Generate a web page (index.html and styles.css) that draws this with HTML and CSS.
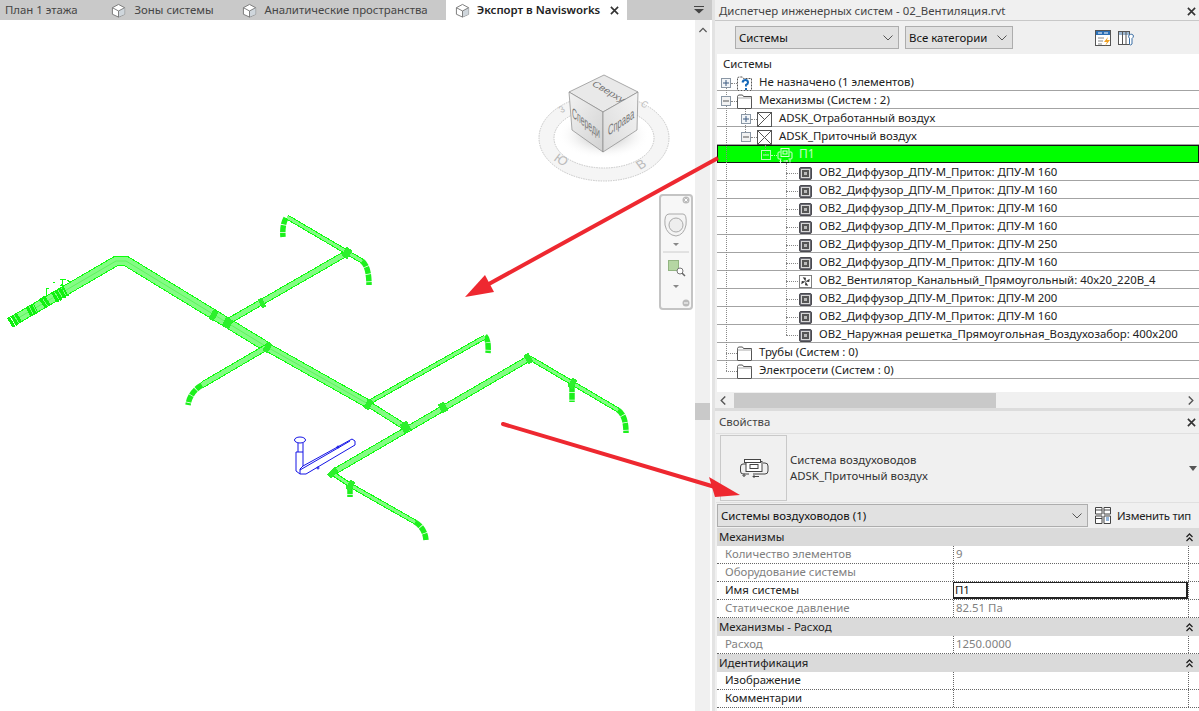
FILE: index.html
```html
<!DOCTYPE html>
<html lang="ru">
<head>
<meta charset="utf-8">
<title>Диспетчер инженерных систем</title>
<link rel="stylesheet" href="styles.css">
</head>
<body>
<svg class="defs" width="0" height="0" aria-hidden="true">
  <symbol id="i-house" viewBox="0 0 16 16"><path d="M8 1.500 14.500 5v7L8 15 1.500 12V5Z" fill="#fff" stroke="#777"/><path d="M8 8.500 14.500 5v7L8 15Z" fill="#cfd6dc"/><path d="M1.500 5 8 8.500 14.500 5M8 8.500V15" fill="none" stroke="#777"/></symbol>
  <symbol id="i-folder" viewBox="0 0 15 15"><path d="M.5 2.500V14.500H14.500V2.500H6.500L5.500 1H1.500Z" fill="#fff" stroke="#555"/><path d="M.5 4H14.500" stroke="#aaa"/></symbol>
  <symbol id="i-query" viewBox="0 0 15 15"><path d="M.5 2.500V14.500H14.500V2.500H6.500L5.500 1H1.500Z" fill="#fff" stroke="#555" stroke-dasharray="2 1"/><path d="M5.500 6.500Q6 4 8.500 4T11 6.500Q11 8 9 9V10.500" fill="none" stroke="#1668b8" stroke-width="2"/><path d="M8 12h2v2H8Z" fill="#1668b8"/></symbol>
  <symbol id="i-exhaust" viewBox="0 0 15 15"><rect x=".5" y=".5" width="14" height="14" fill="#fff" stroke="#555"/><path d="M.5.500 7.500 7.500M.5 14.500 14.500.500" stroke="#555"/></symbol>
  <symbol id="i-supply" viewBox="0 0 15 15"><rect x=".5" y=".5" width="14" height="14" fill="#fff" stroke="#555"/><path d="M.5.500 14.500 14.500M14.500.500.500 14.500" stroke="#555"/></symbol>
  <symbol id="i-diff" viewBox="0 0 13 13"><rect x=".5" y=".5" width="12" height="12" rx="1.500" fill="#6a6a72" stroke="#4a4a50"/><rect x="2.500" y="2.500" width="8" height="8" fill="#555" stroke="#d8d8d8"/><rect x="5" y="5" width="3" height="3" fill="#bbb"/></symbol>
  <symbol id="i-fan" viewBox="0 0 14 14"><rect x=".5" y=".5" width="13" height="13" fill="#fff" stroke="#777"/><path d="M7 7 4 2.500 7.500 3ZM7 7l4.500-3-.5 3.500ZM7 7l3 4.500-3.500-.5ZM7 7l-4.500 3 .5-3.500Z" fill="#333"/></symbol>
  <symbol id="i-sys" viewBox="0 0 15 15"><path d="M3 4H1.500Q.5 4 .5 5V10Q.5 11 1.500 11H4M12 4h1.500Q14.500 4 14.500 5V10Q14.500 11 13.500 11H11" fill="none" stroke="currentColor"/><rect x="3.500" y=".5" width="8" height="8" fill="none" stroke="currentColor"/><rect x="5.500" y="3" width="4" height="3" fill="none" stroke="currentColor"/><path d="M6 13H10M9 12l1 1-1 1M3 11.500v3M2 13.500l1 1 1-1M12.500 11.500v3" fill="none" stroke="currentColor"/></symbol>
  <symbol id="i-chev" viewBox="0 0 10 6"><path d="M.5.500 5 5 9.500.500" fill="none" stroke="#555"/></symbol>
  <symbol id="i-dchev" viewBox="0 0 7 9"><path d="M.5 4 3.500 1 6.500 4M.5 8 3.500 5 6.500 8" fill="none" stroke="#222" stroke-width="1.300"/></symbol>
  <symbol id="i-x" viewBox="0 0 10 10"><path d="M1 1 9 9M9 1 1 9" stroke="#333" stroke-width="1.800"/></symbol>
  <symbol id="i-plus" viewBox="0 0 10 10"><rect x=".5" y=".5" width="9" height="9" fill="#f2f5f8" stroke="#8a97a5"/><path d="M2 5H8M5 2V8" stroke="#3c5a80"/></symbol>
  <symbol id="i-minus" viewBox="0 0 10 10"><rect x=".5" y=".5" width="9" height="9" fill="#f2f2f2" stroke="#8a97a5"/><path d="M2 5H8" stroke="#555"/></symbol>
</svg>

<div class="app">
  <main class="left">
    <nav class="tabs">
      <div class="tab tab-first"><span class="tab-label">План 1 этажа</span></div>
      <div class="tab tab-second"><svg class="tab-icon"><use href="#i-house"/></svg><span class="tab-label">Зоны системы</span></div>
      <div class="tab tab-last"><svg class="tab-icon"><use href="#i-house"/></svg><span class="tab-label">Аналитические пространства</span></div>
      <div class="tab tab-active"><svg class="tab-icon"><use href="#i-house"/></svg><span class="tab-label">Экспорт в Navisworks</span><svg class="tab-close"><use href="#i-x"/></svg></div>
      <div class="tab-menu"><svg width="10" height="8" viewBox="0 0 10 8"><path d="M0 .5H10" stroke="#444"/><path d="M0 3H10L5 7.500Z" fill="#444"/></svg></div>
    </nav>
    <div class="view-row">
      <div class="canvas">
        <svg class="model" viewBox="0 20 695 691" width="695" height="691">
          <defs>
            <g id="d-wide"><path d="M13 321 116 261H126L267 347"/></g>
            <g id="d-wide2"><path d="M267 347 370 405"/></g>
            <g id="d-mid"><path d="M370 405 405 427M227 322 347 253M267 347 202 385M332 473 528 359"/></g>
            <g id="d-thin"><path d="M287 217 362 261M350 485 415 522M368 403 485 337M530 358 618 410M332 473 350 485"/></g>
            <g id="d-drop"><path d="M286 218Q282 225 283 237M362 261Q369 266 369 285M485 336Q489 340 488 353M572 385V402M618 410Q626 415 626 433M350 487V497M415 522Q425 528 426 540M202 385Q190 392 188 405"/></g>
            <radialGradient id="cube-shadow"><stop offset="0" stop-color="#a0a0a0"/><stop offset="1" stop-color="#fff" stop-opacity="0"/></radialGradient>
            <linearGradient id="cube-left" x1="0" y1="0" x2="1" y2="1"><stop offset="0" stop-color="#f2f2f2"/><stop offset="1" stop-color="#d2d2d2"/></linearGradient>
            <linearGradient id="cube-right" x1="0" y1="1" x2="1" y2="0"><stop offset="0" stop-color="#dadada"/><stop offset="1" stop-color="#f4f4f4"/></linearGradient>
          </defs>

          <use href="#d-drop" class="drop"/>
          <use href="#d-wide" class="d-o w-wide"/><use href="#d-wide" class="d-i w-wide-i"/><use href="#d-wide" class="d-c"/>
          <use href="#d-wide2" class="d-o w-wide2"/><use href="#d-wide2" class="d-i w-wide2-i"/><use href="#d-wide2" class="d-c"/>
          <use href="#d-mid" class="d-o w-mid"/><use href="#d-mid" class="d-i w-mid-i"/>
          <use href="#d-thin" class="d-o w-thin"/><use href="#d-thin" class="d-i w-thin-i"/>

          <g class="joint">
            <path d="M211 314 216 317M224 321 231 325M265 346 270 349M366 403 371 406M344 251 350 255M260 304 264 302M402 429 409 425M440 409 446 406M570 382 575 385M348 484 353 487M526 360 531 357M331 471 335 475"/>
          </g>
          <g class="end-fit">
            <path d="M10 323 20 317M28 312 36 308M42 304 48 300M54 298 66 291"/>
          </g>
          <path class="annot" d="M46 297V289M46 288H49M60 286 63 284M62 279V291M60 279H66M67 280 70 282M53 283 55 282"/>

          <g class="blue">
            <ellipse cx="300" cy="440" rx="5.500" ry="3"/>
            <path d="M298 443V452M303 443V452M296 452H303M296 452V471L300 474H306L355 445V441L352 439 303 466M303 452V466M300 470 350 441M300 474V469L303 466"/>
            <circle cx="338" cy="447" r="1"/><circle cx="318" cy="468" r="1"/>
          </g>

          <ellipse class="cube-floor" cx="604" cy="138" rx="65" ry="43"/>
          <ellipse class="cube-ring" cx="604" cy="138" rx="50" ry="30"/>
          <ellipse cx="604" cy="135" rx="46" ry="24" fill="url(#cube-shadow)"/>
          <text class="compass" transform="matrix(.85 .5 -.6 .8 553 160)">Ю</text>
          <text class="compass" transform="matrix(.85 -.5 .6 .8 640 170)">В</text>
          <text class="compass compass-sm" transform="matrix(.8 -.3 .5 .8 561 113)">З</text>
          <text class="compass compass-sm" transform="matrix(.8 .3 -.5 .8 640 106)">С</text>
          <polygon points="604,75 638,92 603,112 569,92" fill="#e9e9e9" stroke="#888" stroke-width=".7"/>
          <polygon points="569,92 603,112 603,152 572,130" fill="url(#cube-left)" stroke="#888" stroke-width=".7"/>
          <polygon points="638,92 603,112 603,152 637,130" fill="url(#cube-right)" stroke="#888" stroke-width=".7"/>
          <text class="cube-text" transform="matrix(.8 .46 -.6 .55 591 85)">Сверху</text>
          <text class="cube-text" transform="matrix(.6 .46 0 1.250 572 117)">Спереди</text>
          <text class="cube-text" transform="matrix(.66 -.46 0 1.250 608 136)">Справа</text>
        </svg>
        <div class="navbar">
          <svg width="34" height="116" viewBox="0 0 34 116">
            <circle cx="27" cy="6" r="3.500" fill="#bbb"/><path d="M25.500 4.500 28.500 7.500M28.500 4.500 25.500 7.500" stroke="#fff"/>
            <path d="M6 31Q5 20 10 20L24 20Q28 20 27 31 25 41 17 42 8 41 6 31Z" fill="#f4f4f4" stroke="#aaa"/>
            <circle cx="17" cy="31" r="7" fill="#eee" stroke="#aaa"/>
            <path d="M14 49H20L17 52Z" fill="#888"/>
            <path d="M4 58H30" stroke="#ccc"/>
            <rect x="9.500" y="66.500" width="10" height="10" fill="#b5d6a3" stroke="#93b582"/>
            <circle cx="21" cy="77" r="3" fill="#fff" stroke="#777"/><path d="M23 79 26 82" stroke="#666" stroke-width="1.500"/>
            <path d="M14 91H20L17 94Z" fill="#888"/>
            <circle cx="27" cy="109" r="3.500" fill="#bbb"/><path d="M25 109H29" stroke="#fff"/>
          </svg>
        </div>
      </div>
      <div class="vscroll">
        <svg class="vscroll-up" width="8" height="6" viewBox="0 0 10 6"><path d="M.5 5.500 5 1 9.500 5.500" fill="none" stroke="#555" stroke-width="1.500"/></svg>
        <div class="vscroll-thumb"></div>
      </div>
    </div>
  </main>

  <aside class="right">
    <section class="panel-sys">
      <header class="panel-title panel-title-sys"><span>Диспетчер инженерных систем - 02_Вентиляция.rvt</span><svg class="panel-close"><use href="#i-x"/></svg></header>
      <div class="toolbar">
        <div class="select select-sys"><span>Системы</span><svg class="chev"><use href="#i-chev"/></svg></div>
        <div class="select select-cat"><span>Все категории</span><svg class="chev"><use href="#i-chev"/></svg></div>
        <svg class="tool-icon tool-first" viewBox="0 0 16 16"><rect x=".5" y=".5" width="15" height="15" fill="#fff" stroke="#555"/><rect x="1" y="1" width="14" height="4" fill="#2c6fb5"/><path d="M3 3H7M9 3h4" stroke="#fff"/><path d="M3 8H9M3 11H8M3 14H7" stroke="#888"/><path d="M13 7 9 12H12L10 16 15 10H12Z" fill="#f0a020"/></svg>
        <svg class="tool-icon" viewBox="0 0 16 16"><rect x=".5" y="1.500" width="11" height="13" fill="#fff" stroke="#555"/><rect x="1" y="2" width="10" height="3" fill="#9db8d2"/><path d="M4.500 2V14M8 2V14" stroke="#555"/><path d="M11 5Q14.500 3 15.500 6 15 8 14 8.500V14Q12.500 16 11.500 14V8.500Q10 7 11 5Z" fill="#fff" stroke="#3a6ea5"/></svg>
      </div>
      <div class="tree">
        <div class="tree-head">Системы</div>
        <i class="vline v0"></i><i class="vline v1"></i><i class="vline v2"></i><i class="vline v3"></i>
        <div class="row l0"><svg class="exp"><use href="#i-plus"/></svg><b class="dash"></b><svg class="ic"><use href="#i-query"/></svg><span>Не назначено (1 элементов)</span></div>
        <div class="row l0"><svg class="exp"><use href="#i-minus"/></svg><b class="dash"></b><svg class="ic"><use href="#i-folder"/></svg><span>Механизмы (Систем : 2)</span></div>
        <div class="row l1"><svg class="exp"><use href="#i-plus"/></svg><b class="dash"></b><svg class="ic"><use href="#i-exhaust"/></svg><span>ADSK_Отработанный воздух</span></div>
        <div class="row l1"><svg class="exp"><use href="#i-minus"/></svg><b class="dash"></b><svg class="ic"><use href="#i-supply"/></svg><span>ADSK_Приточный воздух</span></div>
        <div class="row l2 row-sel"><svg class="exp exp-sel" viewBox="0 0 10 10"><rect x=".5" y=".5" width="9" height="9" fill="none" stroke="#b8ffb8"/><path d="M2 5H8" stroke="#b8ffb8"/></svg><b class="dash"></b><svg class="ic"><use href="#i-sys"/></svg><span>П1</span></div>
        <div class="row l3"><b class="dash"></b><svg class="ic"><use href="#i-diff"/></svg><span>ОВ2_Диффузор_ДПУ-М_Приток: ДПУ-М 160</span></div>
        <div class="row l3"><b class="dash"></b><svg class="ic"><use href="#i-diff"/></svg><span>ОВ2_Диффузор_ДПУ-М_Приток: ДПУ-М 160</span></div>
        <div class="row l3"><b class="dash"></b><svg class="ic"><use href="#i-diff"/></svg><span>ОВ2_Диффузор_ДПУ-М_Приток: ДПУ-М 160</span></div>
        <div class="row l3"><b class="dash"></b><svg class="ic"><use href="#i-diff"/></svg><span>ОВ2_Диффузор_ДПУ-М_Приток: ДПУ-М 160</span></div>
        <div class="row l3"><b class="dash"></b><svg class="ic"><use href="#i-diff"/></svg><span>ОВ2_Диффузор_ДПУ-М_Приток: ДПУ-М 250</span></div>
        <div class="row l3"><b class="dash"></b><svg class="ic"><use href="#i-diff"/></svg><span>ОВ2_Диффузор_ДПУ-М_Приток: ДПУ-М 160</span></div>
        <div class="row l3"><b class="dash"></b><svg class="ic"><use href="#i-fan"/></svg><span>ОВ2_Вентилятор_Канальный_Прямоугольный: 40х20_220В_4</span></div>
        <div class="row l3"><b class="dash"></b><svg class="ic"><use href="#i-diff"/></svg><span>ОВ2_Диффузор_ДПУ-М_Приток: ДПУ-М 200</span></div>
        <div class="row l3"><b class="dash"></b><svg class="ic"><use href="#i-diff"/></svg><span>ОВ2_Диффузор_ДПУ-М_Приток: ДПУ-М 160</span></div>
        <div class="row l3"><b class="dash"></b><svg class="ic"><use href="#i-diff"/></svg><span>ОВ2_Наружная решетка_Прямоугольная_Воздухозабор: 400х200</span></div>
        <div class="row l0 l0-noexp"><b class="dash"></b><svg class="ic"><use href="#i-folder"/></svg><span>Трубы (Систем : 0)</span></div>
        <div class="row l0 l0-noexp"><b class="dash"></b><svg class="ic"><use href="#i-folder"/></svg><span>Электросети (Систем : 0)</span></div>
      </div>
      <div class="hscroll">
        <svg width="6" height="9" viewBox="0 0 6 10"><path d="M5.500.500 1 5 5.500 9.500" fill="none" stroke="#555" stroke-width="1.500"/></svg>
        <div class="hscroll-track"><div class="hscroll-thumb"></div></div>
        <svg width="6" height="9" viewBox="0 0 6 10"><path d="M.5.500 5 5 .5 9.500" fill="none" stroke="#555" stroke-width="1.500"/></svg>
      </div>
    </section>

    <section class="panel-props">
      <header class="panel-title panel-title-props"><span>Свойства</span><svg class="panel-close"><use href="#i-x"/></svg></header>
      <div class="type-block">
        <div class="thumb"><svg class="thumb-icon" viewBox="0 0 30 20"><path d="M7 6H4Q1.500 6 1.500 9V13Q1.500 16 4 16H10M24 5H26Q29 5 29 8V13Q29 16 26 16H14" fill="none" stroke="#444"/><rect x="7" y="3.500" width="16" height="10" fill="#fff" stroke="#444"/><rect x="5.500" y="1.500" width="16" height="3" fill="#fff" stroke="#444"/><rect x="11" y="6.500" width="8" height="4" fill="none" stroke="#444"/><path d="M5 15.500v3M3.500 17l1.500 1.500L6.500 17M14 18.500H20M15.500 17 14 18.500 15.500 20" fill="none" stroke="#444"/></svg></div>
        <div class="type-text"><span>Система воздуховодов</span><span>ADSK_Приточный воздух</span></div>
        <svg class="type-arrow" width="8" height="5" viewBox="0 0 8 5"><path d="M0 0H8L4 5Z" fill="#555"/></svg>
      </div>
      <div class="filter-row">
        <div class="select select-filter"><span>Системы воздуховодов (1)</span><svg class="chev"><use href="#i-chev"/></svg></div>
        <div class="edit-type"><svg width="16" height="17" viewBox="0 0 16 17"><path d="M.5.500H7V7H.5ZM9 .500H15.500V7H9ZM.500 9H7V16.500H.5ZM9 9H15.500V16.500H9Z" fill="#fff" stroke="#444"/><path d="M11 11H14M11 13H14" stroke="#2c6fb5"/><path d="M.5 3H7M9 3H15.500M.5 11.500H7" stroke="#444"/></svg><span>Изменить тип</span></div>
      </div>
      <div class="props">
        <div class="group"><span>Механизмы</span><svg class="group-chev"><use href="#i-dchev"/></svg></div>
        <div class="prop prop-off"><span class="p-name">Количество элементов</span><span class="p-val">9</span><span class="p-end"></span></div>
        <div class="prop prop-off"><span class="p-name">Оборудование системы</span><span class="p-val"></span><span class="p-end"></span></div>
        <div class="prop"><span class="p-name">Имя системы</span><span class="p-val p-edit">П1</span><span class="p-end"></span></div>
        <div class="prop prop-off"><span class="p-name">Статическое давление</span><span class="p-val">82.51 Па</span><span class="p-end"></span></div>
        <div class="group"><span>Механизмы - Расход</span><svg class="group-chev"><use href="#i-dchev"/></svg></div>
        <div class="prop prop-off"><span class="p-name">Расход</span><span class="p-val">1250.0000</span><span class="p-end"></span></div>
        <div class="group"><span>Идентификация</span><svg class="group-chev"><use href="#i-dchev"/></svg></div>
        <div class="prop"><span class="p-name">Изображение</span><span class="p-val"></span><span class="p-end"></span></div>
        <div class="prop"><span class="p-name">Комментарии</span><span class="p-val"></span><span class="p-end"></span></div>
      </div>
    </section>
  </aside>
</div>

<svg class="arrows" width="1199" height="711" viewBox="0 0 1199 711" aria-hidden="true">
  <path d="M718 158 487 285" stroke="#ee2830" stroke-width="4" fill="none"/>
  <polygon points="465,297 494,292 485,275" fill="#ee2830"/>
  <path d="M503 424 715 487" stroke="#ee2830" stroke-width="4" fill="none" stroke-linecap="round"/>
  <polygon points="740,495 715,497 709,477" fill="#ee2830"/>
</svg>
</body>
</html>
```

FILE: styles.css
```css
* { box-sizing: border-box; }
html, body { margin: 0; padding: 0; }
body {
  width: 1199px;
  height: 711px;
  overflow: hidden;
  position: relative;
  background: #fff;
  font: 11.4px/18px "Noto Sans", "Open Sans", sans-serif;
  color: #1a1a1a;
}
.defs { position: absolute; }
.app { display: flex; width: 1199px; height: 711px; }

/* left */
.left { width: 712px; display: flex; flex-direction: column; }
.tabs { height: 20px; background: #c9c9c9; display: flex; align-items: stretch; color: #454545; flex: none; }
.tab { display: flex; align-items: center; gap: 8px; padding: 0 18px 0 9px; white-space: nowrap; }
.tab-first { padding: 0 25px 0 5px; }
.tab-second { padding-right: 19px; }
.tab-last { padding-right: 18px; }
.tab-icon { width: 15px; height: 15px; flex: none; }
.tab-active { background: #fff; color: #222; font-weight: 600; width: 181px; padding-right: 8px; gap: 7px; }
.tab-close { width: 9px; height: 9px; margin-left: auto; }
.tab-menu { margin-left: auto; width: 18px; display: flex; align-items: center; }
.view-row { flex: 1; display: flex; min-height: 0; }
.canvas { width: 695px; position: relative; background: #fff; overflow: hidden; }
.model { display: block; }
.d-o { fill: none; stroke: #0cff0c; shape-rendering: crispEdges; }
.d-i { fill: none; stroke: #84fb84; shape-rendering: crispEdges; }
.d-c { fill: none; stroke: #5cf85c; stroke-width: 1; }
.w-wide { stroke-width: 10.5px; } .w-wide-i { stroke-width: 8.5px; }
.w-wide2 { stroke-width: 9px; } .w-wide2-i { stroke-width: 7px; }
.w-mid { stroke-width: 6.5px; } .w-mid-i { stroke-width: 4.5px; }
.w-thin { stroke-width: 5px; } .w-thin-i { stroke-width: 3px; }
.drop { fill: none; stroke: #1cf01c; stroke-width: 5.5px; stroke-dasharray: 7 .7; }
.joint path { fill: none; stroke: #2cf02c; stroke-width: 10px; shape-rendering: crispEdges; }
.end-fit path { fill: none; stroke: #10f010; stroke-width: 11px; stroke-dasharray: 3 1; shape-rendering: crispEdges; }
.annot { fill: none; stroke: #0cff0c; stroke-width: 1; shape-rendering: crispEdges; }
.blue { fill: none; stroke: #1414e6; stroke-width: 1; }
.cube-floor { fill: #f5f5f5; stroke: #c6c6c6; stroke-dasharray: 1.500 1; }
.cube-ring { fill: #fff; stroke: #c6c6c6; stroke-dasharray: 1.500 1; }
.cube-text { font: 11.500px "Liberation Sans", sans-serif; fill: #777; }
.compass { font: 13px "Liberation Sans", sans-serif; fill: #bbb; }
.compass-sm { font-size: 10px; }
.navbar {
  position: absolute;
  left: 659px; top: 174px;
  width: 34px; height: 116px;
  background: #f7f7f7;
  border-radius: 4px;
  box-shadow: inset 0 0 0 2px #c4c4c4;
}
.navbar svg { display: block; }
.vscroll { width: 15px; background: #f0f0f0; position: relative; display: flex; flex-direction: column; align-items: center; padding-top: 7px; }
.vscroll-thumb { position: absolute; left: 0; right: 0; top: 383px; height: 17px; background: #c9c9c9; }

/* right */
.right { flex: 1; display: flex; flex-direction: column; background: #f0f0f0; border-left: 3px solid #e3e3e3; min-width: 0; }
.panel-sys { height: 408px; display: flex; flex-direction: column; flex: none; }
.panel-title { display: flex; align-items: center; justify-content: space-between; color: #444; padding: 0 3px 0 4px; flex: none; }
.panel-title-sys { height: 21px; border-bottom: 1px solid #c8c8c8; padding-top: 2px; }
.panel-title-props { height: 22px; }
.panel-close { width: 9px; height: 9px; }
.toolbar { height: 33px; display: flex; align-items: center; padding: 0 0 0 20px; gap: 6px; flex: none; }
.select { height: 23px; background: #e1e1e1; border: 1px solid #adadad; display: flex; align-items: center; justify-content: space-between; padding: 0 5px 0 3px; color: #111; }
.select-sys { width: 164px; }
.select-cat { width: 108px; }
.chev { width: 10px; height: 6px; }
.tool-icon { width: 16px; height: 16px; }
.tool-first { margin-left: 76px; }
.tool-icon + .tool-icon { margin-left: 1px; }
.tree { height: 338px; margin-left: 2px; background: #fff; position: relative; flex: none; color: #222; }
.tree-head { height: 19px; padding: 1px 0 0 6px; }
.row { height: 18px; border-bottom: 1px solid #a3a3a3; display: flex; align-items: center; white-space: nowrap; padding-top: 1px; }
.row span { margin-left: 7px; }
.exp { width: 10px; height: 10px; flex: none; position: relative; background: #fff; margin-top: 2px; }
.ic { width: 15px; height: 15px; flex: none; position: relative; background: #fff; margin-top: 2px; }
.dash { width: 6px; height: 0; border-top: 1px dotted #888; flex: none; margin-top: 2px; }
.l0 { padding-left: 4px; }
.l0-noexp { padding-left: 9px; }
.l0-noexp .dash { width: 11px; }
.l1 { padding-left: 24px; }
.l2 { padding-left: 44px; }
.l3 { padding-left: 69px; }
.l3 .dash { width: 12px; margin-right: 1px; }
.l3 .ic { width: 13px; height: 13px; }
.row-sel { background: #00ff00; border: 1px solid #111; color: #c6ffc6; padding: 0 0 0 43px; }
.row-sel .exp, .row-sel .ic { background: none; }
.row-sel .dash { border-color: #b8ffb8; width: 6px; }
.row-sel .ic { color: #d8ffd8; width: 16px; }
.row-sel span { font-size: 12px; margin-left: 6px; }
.vline { position: absolute; width: 0; border-left: 1px dotted #888; }
.v0 { left: 9px; top: 31px; height: 286px; }
.v1 { left: 28px; top: 55px; height: 29px; }
.v2 { left: 48px; top: 91px; height: 10px; }
.v3 { left: 69px; top: 109px; height: 172px; }
.hscroll { height: 16px; display: flex; align-items: center; gap: 5px; padding: 0 5px 0 5px; flex: none; background: #f0f0f0; }
.hscroll-track { flex: 1; height: 15px; }
.hscroll-thumb { width: 262px; height: 15px; margin-left: 3px; background: #c9c9c9; }

.panel-props { flex: 1; border-top: 3px solid #dcdcdc; display: flex; flex-direction: column; min-height: 0; }
.type-block { height: 70px; flex: none; margin-left: 1px; border: 1px solid #e0e0e0; border-width: 1px 0; display: flex; align-items: center; padding: 0 2px 0 4px; }
.thumb { width: 67px; height: 66px; border: 1px solid #c9c9c9; display: flex; align-items: center; justify-content: center; flex: none; }
.thumb-icon { width: 30px; height: 20px; }
.type-text { display: flex; flex-direction: column; margin-left: 3px; color: #333; line-height: 16px; }
.type-arrow { margin-left: auto; margin-right: 0; }
.filter-row { height: 25px; flex: none; display: flex; align-items: center; padding-left: 2px; }
.select-filter { width: 371px; padding-left: 3px; }
.edit-type { display: flex; align-items: center; gap: 6px; margin-left: 7px; color: #222; white-space: nowrap; letter-spacing: -.25px; }
.props { background: #fff; margin-left: 2px; flex: 1; }
.group { height: 18px; background: #dadada; display: flex; align-items: center; justify-content: space-between; padding: 0 6px 0 2px; color: #222; }
.group-chev { width: 7px; height: 9px; }
.prop { height: 18px; display: grid; grid-template-columns: 236px 235px 1fr; border-bottom: 1px dotted #666; color: #222; }
.prop span { display: block; line-height: 15px; height: 17px; }
.prop-off { color: #7f7f7f; }
.p-name { padding-left: 8px; }
.p-val { border-left: 1px dotted #666; padding-left: 2px; }
.p-end { border-left: 1px dotted #666; }
.p-edit { border: 2px solid #222; border-width: 1px 2px 2px 1px; color: #111; padding-left: 1px; line-height: 14px !important; }

.arrows { position: absolute; left: 0; top: 0; pointer-events: none; }
```
